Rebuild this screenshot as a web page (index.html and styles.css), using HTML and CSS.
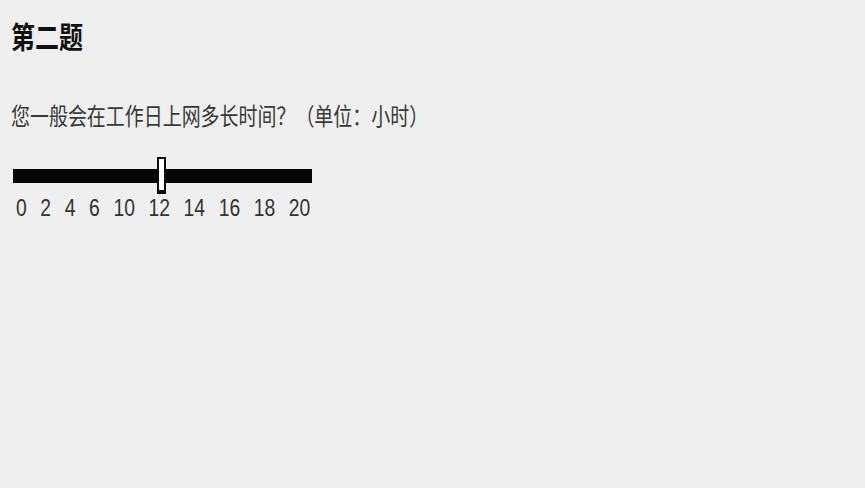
FILE: index.html
```html
<!DOCTYPE html>
<html lang="zh-CN">
<head>
<meta charset="utf-8">
<title>第二题</title>
<link rel="stylesheet" href="styles.css">
</head>
<body>
<main class="page">
  <h1 class="title"><span class="squeeze-title">第二题</span></h1>
  <p class="question"><span class="squeeze-q">您一般会在工作日上网多长时间？（单位：小时）</span></p>
  <div class="slider">
    <div class="track"></div>
    <div class="thumb"></div>
  </div>
  <div class="ticks">
    <span>0</span><span>2</span><span>4</span><span>6</span><span>10</span><span>12</span><span>14</span><span>16</span><span>18</span><span>20</span>
  </div>
</main>
</body>
</html>
```
FILE: styles.css
```css
html, body {
  margin: 0;
  padding: 0;
  background: #efefef;
}
.page {
  display: flex;
  flex-direction: column;
  align-items: flex-start;
  font-family: "Noto Sans CJK SC", "Liberation Sans", sans-serif;
}
.title {
  margin: 20px 0 0 11px;
  font-size: 30px;
  line-height: 30px;
  height: 30px;
  font-weight: 700;
  color: #111;
  white-space: nowrap;
}
.squeeze-title {
  display: inline-block;
  transform: scaleX(0.8);
  transform-origin: left center;
}
.question {
  margin: 53px 0 0 11px;
  font-size: 24px;
  line-height: 24px;
  height: 24px;
  color: #383838;
  white-space: nowrap;
}
.squeeze-q {
  display: inline-block;
  transform: scaleX(0.79);
  transform-origin: left center;
}
.slider {
  position: relative;
  margin: 42px 0 0 13px;
  width: 299px;
  height: 14px;
}
.track {
  width: 100%;
  height: 100%;
  background: #050505;
}
.thumb {
  position: absolute;
  left: 144px;
  top: -12px;
  width: 5px;
  height: 31px;
  background: #fff;
  border: 2px solid #0a0a0a;
  border-bottom-width: 4px;
}
.ticks {
  display: flex;
  gap: 16.2px;
  margin: 14px 0 0 15.6px;
  font-family: "Liberation Sans", Arial, sans-serif;
  font-size: 23px;
  line-height: 23px;
  color: #333;
  transform: scaleX(0.84);
  transform-origin: left center;
}
```
